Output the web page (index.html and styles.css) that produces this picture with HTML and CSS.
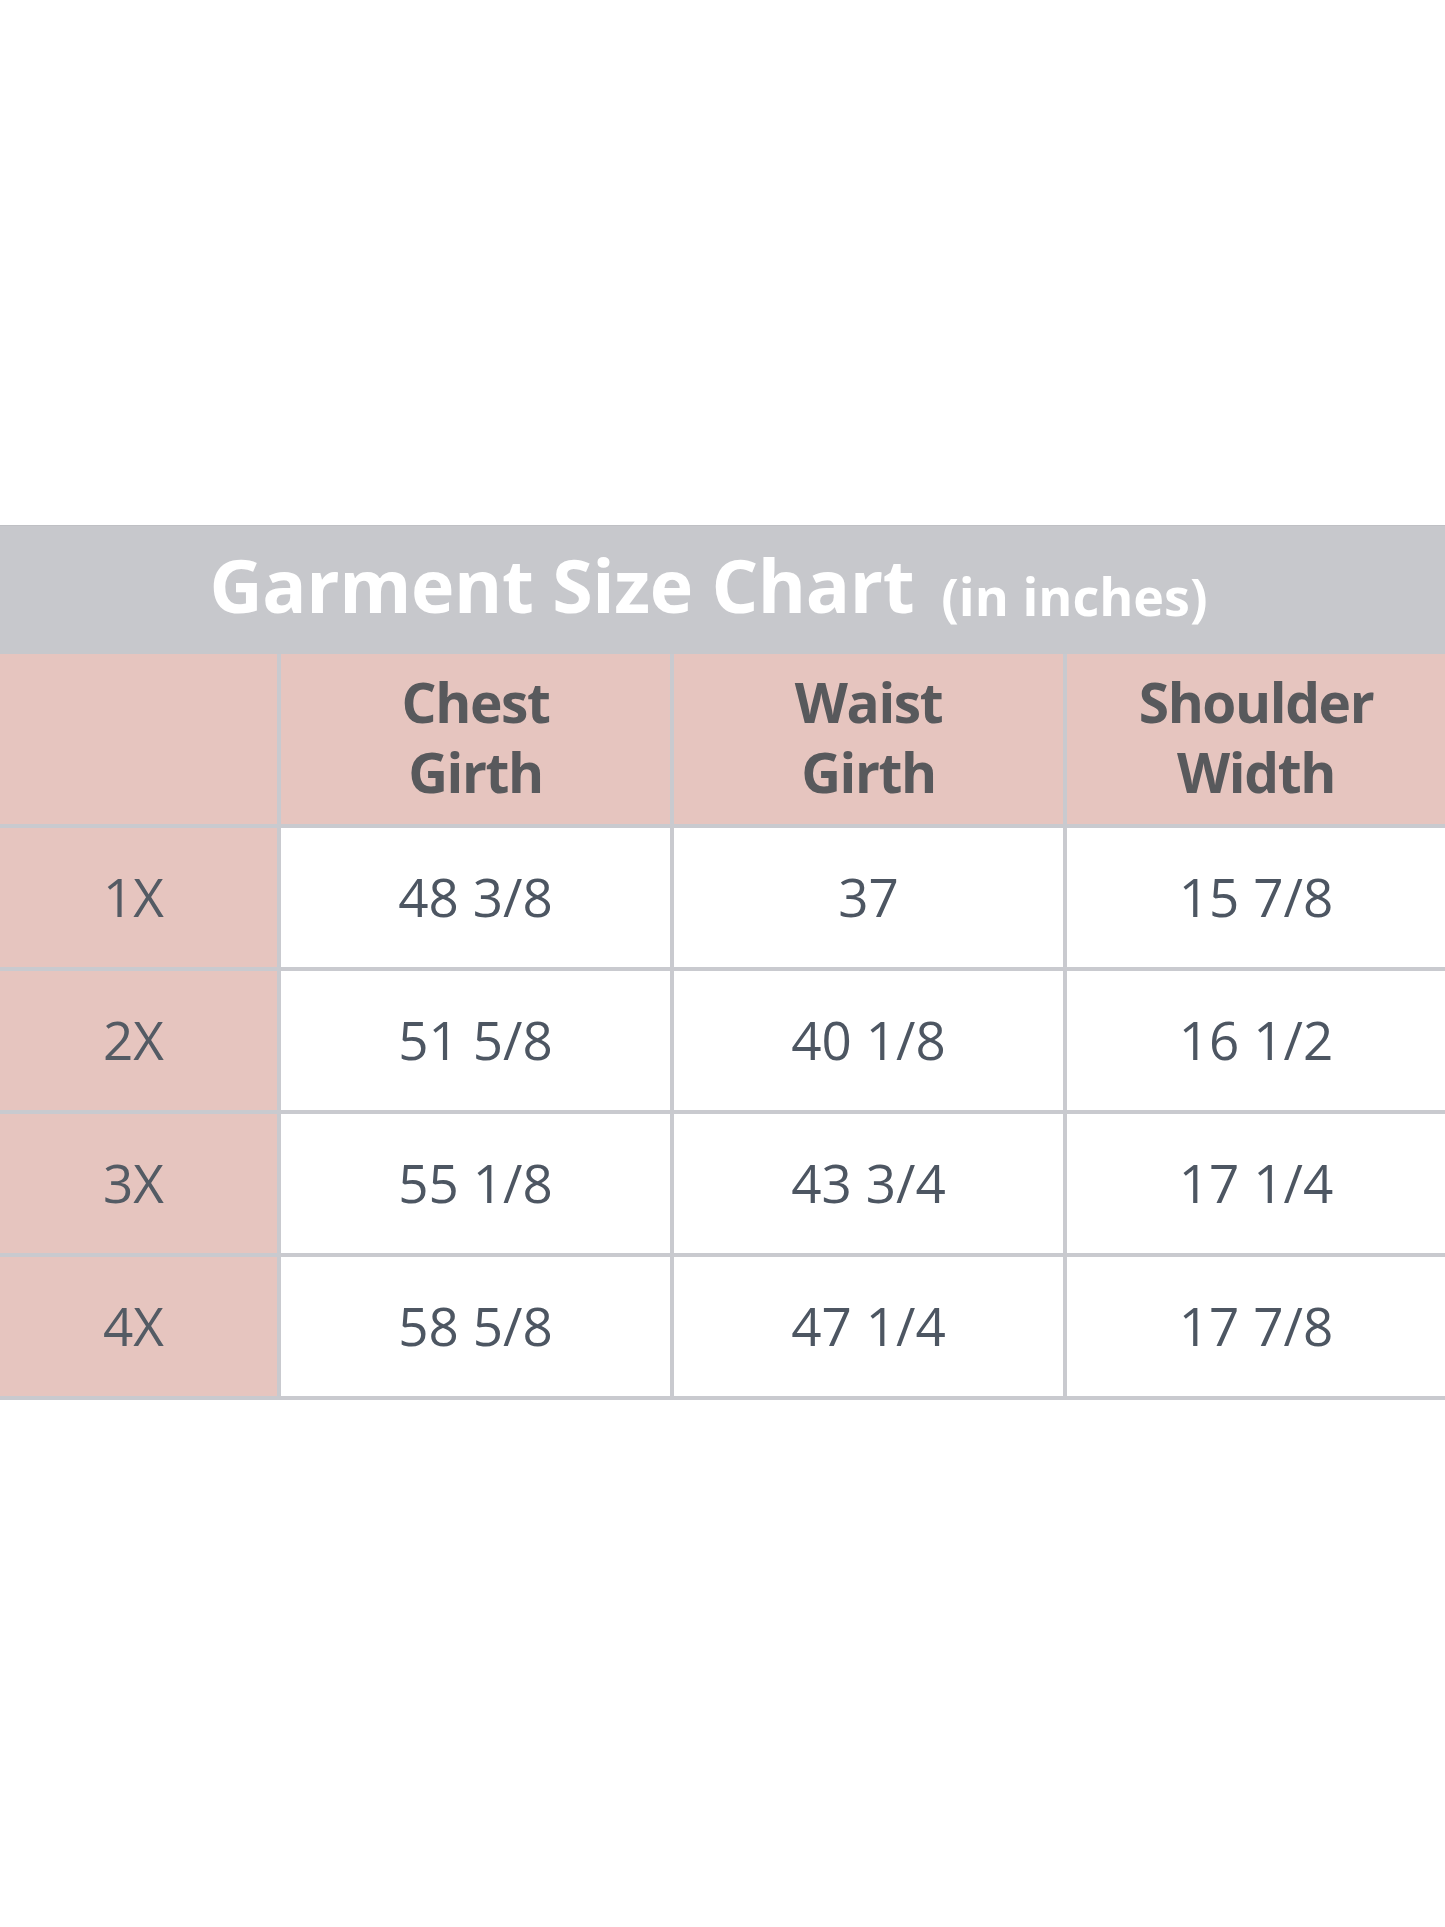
FILE: index.html
```html
<!DOCTYPE html>
<html lang="en">
<head>
<meta charset="utf-8">
<title>Garment Size Chart</title>
<link rel="stylesheet" href="styles.css">
</head>
<body>
<main class="page">
  <section class="chart">
    <header class="chart-title">
      <h1 class="title-main">Garment Size Chart</h1>
      <span class="title-unit">(in inches)</span>
    </header>
    <div class="grid">
      <div class="cell head"></div>
      <div class="cell head">Chest<br>Girth</div>
      <div class="cell head">Waist<br>Girth</div>
      <div class="cell head">Shoulder<br>Width</div>

      <div class="cell size">1X</div>
      <div class="cell val">48 3/8</div>
      <div class="cell val">37</div>
      <div class="cell val">15 7/8</div>

      <div class="cell size">2X</div>
      <div class="cell val">51 5/8</div>
      <div class="cell val">40 1/8</div>
      <div class="cell val">16 1/2</div>

      <div class="cell size">3X</div>
      <div class="cell val">55 1/8</div>
      <div class="cell val">43 3/4</div>
      <div class="cell val">17 1/4</div>

      <div class="cell size">4X</div>
      <div class="cell val">58 5/8</div>
      <div class="cell val">47 1/4</div>
      <div class="cell val">17 7/8</div>
    </div>
  </section>
</main>
</body>
</html>
```
FILE: styles.css
```css
html, body {
  margin: 0;
  padding: 0;
  background: #ffffff;
}

.page {
  padding-top: 525px;
  min-height: 1927px;
  box-sizing: border-box;
  font-family: "Open Sans", "Noto Sans", "DejaVu Sans", sans-serif;
}

.chart {
  width: 1445px;
}

.chart-title {
  height: 129px;
  background: #c7c8cc;
  border-top: 1px solid #bfc0c4;
  box-sizing: border-box;
  display: flex;
  align-items: baseline;
  justify-content: center;
  gap: 27px;
  padding-top: 4px;
  padding-right: 28px;
  color: #ffffff;
}

.title-main {
  margin: 0;
  font-size: 73.5px;
  font-weight: 700;
  line-height: 110px;
  letter-spacing: -0.4px;
}

.title-unit {
  font-size: 52px;
  font-weight: 700;
  position: relative;
  top: 3px;
}

.grid {
  display: grid;
  grid-template-columns: 277px 389px 389px 1fr;
  grid-template-rows: 170px 139px 139px 139px 139px;
  gap: 4px;
  padding-bottom: 4px;
  background: #c9cacf;
}

.cell {
  display: flex;
  align-items: center;
  justify-content: center;
  text-align: center;
}

.head {
  background: #e6c5bf;
  color: #58595c;
  font-size: 55px;
  font-weight: 700;
  line-height: 70px;
  letter-spacing: -1.4px;
  padding-bottom: 4px;
}

.size {
  background: #e6c5bf;
  color: #545b64;
  font-size: 53px;
  font-weight: 380;
  padding-right: 10px;
  padding-bottom: 2px;
}

.val {
  background: #ffffff;
  color: #4d5662;
  font-size: 53px;
  font-weight: 380;
  padding-bottom: 2px;
}
```
